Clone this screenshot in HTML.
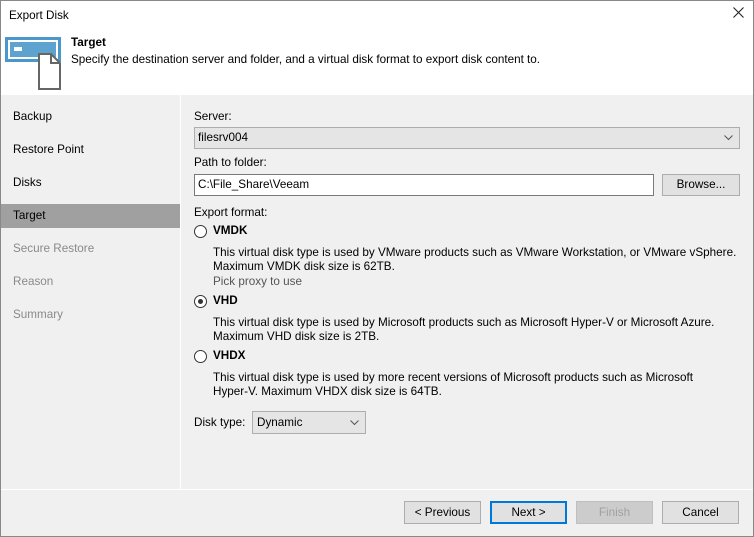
<!DOCTYPE html>
<html><head><meta charset="utf-8"><style>
*{margin:0;padding:0;box-sizing:border-box}
body{width:754px;height:537px;overflow:hidden;font-family:"Liberation Sans",sans-serif;font-size:11.7px;color:#000;background:#fff;position:relative}
.win{position:absolute;left:0;top:0;width:754px;height:537px;border:1px solid #888;}
.a{position:absolute;white-space:nowrap}
.left{position:absolute;left:1px;top:95px;width:179px;height:394px;background:#f0f0f0}
.right{position:absolute;left:181px;top:95px;width:572px;height:394px;background:#f0f0f0}
.foot{position:absolute;left:1px;top:490px;width:752px;height:46px;background:#f0f0f0}
.nav{position:absolute;left:13px}
.btn{position:absolute;top:501px;width:77px;height:23px;border:1px solid #adadad;background:#e1e1e1;text-align:center;line-height:21px}
.radio{position:absolute;width:13px;height:13px;border:1px solid #333;border-radius:50%;background:#fff}
.desc{position:absolute;left:213px;line-height:14px}
.chev{position:absolute;right:6px;top:7px}
</style></head><body>
<div class="win"></div>
<div class="a" style="left:9px;top:9px">Export Disk</div>
<svg class="a" style="left:733px;top:7px" width="11" height="11"><path d="M0.5 0.5L10.5 10.5M10.5 0.5L0.5 10.5" stroke="#222" stroke-width="1.1"/></svg>
<svg class="a" style="left:5px;top:37px" width="58" height="54">
<rect x="1.5" y="1.5" width="53" height="22" fill="none" stroke="#4a97cc" stroke-width="3"/>
<rect x="5" y="5" width="46" height="15" fill="#5ea2d0"/>
<rect x="9" y="10" width="8" height="4" fill="#fff"/>
<path d="M34 17 L46 17 L55 26 L55 52 L34 52 Z" fill="#fff" stroke="#666" stroke-width="2"/>
<path d="M46 17 L46 26 L55 26" fill="none" stroke="#666" stroke-width="2"/>
</svg>
<div class="a" style="left:71px;top:36px;font-weight:bold">Target</div>
<div class="a" style="left:71px;top:53px">Specify the destination server and folder, and a virtual disk format to export disk content to.</div>
<div class="left"></div>
<div class="right"></div>
<div class="foot"></div>
<div class="a" style="left:1px;top:204px;width:179px;height:24px;background:#a0a0a0"></div>
<div class="nav a" style="top:110px">Backup</div>
<div class="nav a" style="top:143px">Restore Point</div>
<div class="nav a" style="top:176px">Disks</div>
<div class="nav a" style="top:209px">Target</div>
<div class="nav a" style="top:242px;color:#8a8a8a">Secure Restore</div>
<div class="nav a" style="top:275px;color:#8a8a8a">Reason</div>
<div class="nav a" style="top:308px;color:#8a8a8a">Summary</div>

<div class="a" style="left:194px;top:110px">Server:</div>
<div class="a" style="left:194px;top:127px;width:546px;height:22px;border:1px solid #adadad;background:#e5e5e5;padding:3px 0 0 3px">filesrv004<svg class="chev" width="9" height="6"><path d="M0.5 0.5L4.5 4.5L8.5 0.5" fill="none" stroke="#555"/></svg></div>
<div class="a" style="left:194px;top:156px">Path to folder:</div>
<div class="a" style="left:194px;top:174px;width:460px;height:22px;border:1px solid #7a7a7a;background:#fff;padding:3px 0 0 3px">C:\File_Share\Veeam</div>
<div class="a" style="left:662px;top:174px;width:78px;height:22px;border:1px solid #adadad;background:#e1e1e1;text-align:center;line-height:20px">Browse...</div>
<div class="a" style="left:194px;top:206px">Export format:</div>
<div class="radio" style="left:194px;top:225px"></div>
<div class="a" style="left:213px;top:224px;font-weight:bold">VMDK</div>
<div class="desc a" style="top:246px">This virtual disk type is used by VMware products such as VMware Workstation, or VMware vSphere.<br>Maximum VMDK disk size is 62TB.</div>
<div class="a" style="left:213px;top:275px;color:#555">Pick proxy to use</div>
<div class="radio" style="left:194px;top:295px"></div>
<div class="a" style="left:198px;top:299px;width:5px;height:5px;border-radius:50%;background:#333"></div>
<div class="a" style="left:213px;top:294px;font-weight:bold">VHD</div>
<div class="desc a" style="top:316px">This virtual disk type is used by Microsoft products such as Microsoft Hyper-V or Microsoft Azure.<br>Maximum VHD disk size is 2TB.</div>
<div class="radio" style="left:194px;top:350px"></div>
<div class="a" style="left:213px;top:349px;font-weight:bold">VHDX</div>
<div class="desc a" style="top:371px">This virtual disk type is used by more recent versions of Microsoft products such as Microsoft<br>Hyper-V. Maximum VHDX disk size is 64TB.</div>
<div class="a" style="left:194px;top:416px">Disk type:</div>
<div class="a" style="left:252px;top:411px;width:114px;height:23px;border:1px solid #adadad;background:#e5e5e5;padding:4px 0 0 4px">Dynamic<svg class="chev" width="9" height="6" style="top:8px"><path d="M0.5 0.5L4.5 4.5L8.5 0.5" fill="none" stroke="#555"/></svg></div>

<div class="btn" style="left:404px">&lt; Previous</div>
<div class="btn" style="left:490px;border:2px solid #0078d7;line-height:19px">Next &gt;</div>
<div class="btn" style="left:576px;background:#ccc;border-color:#bfbfbf;color:#a0a0a0">Finish</div>
<div class="btn" style="left:662px">Cancel</div>
</body></html>
